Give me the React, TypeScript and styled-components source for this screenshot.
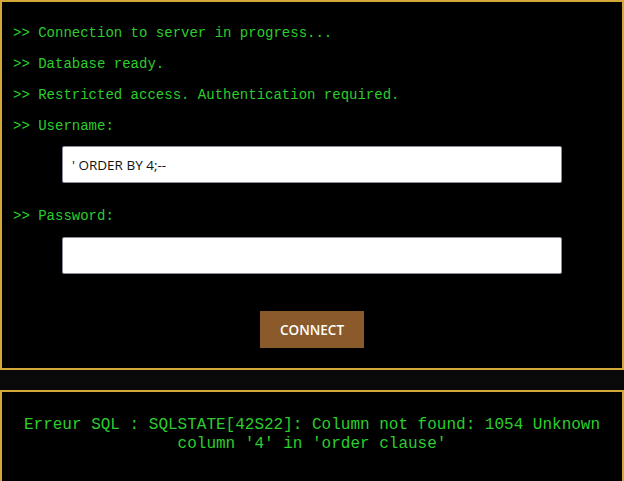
import * as React from 'react'
import styled, { createGlobalStyle } from 'styled-components'

const GlobalStyle = createGlobalStyle`
  body {
    margin: 0;
    background: #0a0a0a;
    font-family: "Liberation Mono", "Courier New", monospace;
  }
`

const Page = styled.div`
  display: flex;
  flex-direction: column;
  gap: 20px;
`

const Panel = styled.section<{ $pad: string }>`
  border: 2px solid #d4a838;
  background: #000;
  padding: ${(p) => p.$pad};
`

const Line = styled.p<{ $gap?: number }>`
  margin: 0 0 ${(p) => (p.$gap ?? 15)}px;
  font-size: 14px;
  line-height: 16px;
  color: #2ccd2c;
  white-space: pre;
`

const Field = styled.input<{ $gap: number }>`
  display: block;
  box-sizing: border-box;
  width: 500px;
  height: 37px;
  margin: 0 0 ${(p) => p.$gap}px 49px;
  padding: 0 9px;
  border: 1px solid #8d8a9c;
  border-radius: 2px;
  background: #fff;
  font-family: "Open Sans", sans-serif;
  font-size: 13.5px;
  color: #111;
  outline: none;
`

const Actions = styled.div`
  display: flex;
  justify-content: center;
`

const ConnectButton = styled.button`
  width: 104px;
  height: 37px;
  border: none;
  background: #8b5a2b;
  color: #fff;
  font-family: "Open Sans", sans-serif;
  font-weight: 600;
  font-size: 13.5px;
  cursor: pointer;
`

const ErrorText = styled.p`
  margin: 0;
  font-size: 16px;
  line-height: 19px;
  color: #2ccd2c;
  text-align: center;
`

export default function App() {
  return (
    <>
      <GlobalStyle />
      <Page>
        <Panel $pad="23px 11px 20px">
          <Line>{'>> Connection to server in progress...'}</Line>
          <Line>{'>> Database ready.'}</Line>
          <Line>{'>> Restricted access. Authentication required.'}</Line>
          <Line $gap={12}>{'>> Username:'}</Line>
          <Field $gap={25} type="text" defaultValue="' ORDER BY 4;--" />
          <Line $gap={13}>{'>> Password:'}</Line>
          <Field $gap={37} type="password" />
          <Actions>
            <ConnectButton>CONNECT</ConnectButton>
          </Actions>
        </Panel>
        <Panel $pad="24px 20px 30px">
          <ErrorText>
            Erreur SQL : SQLSTATE[42S22]: Column not found: 1054 Unknown column '4' in 'order clause'
          </ErrorText>
        </Panel>
      </Page>
    </>
  )
}
